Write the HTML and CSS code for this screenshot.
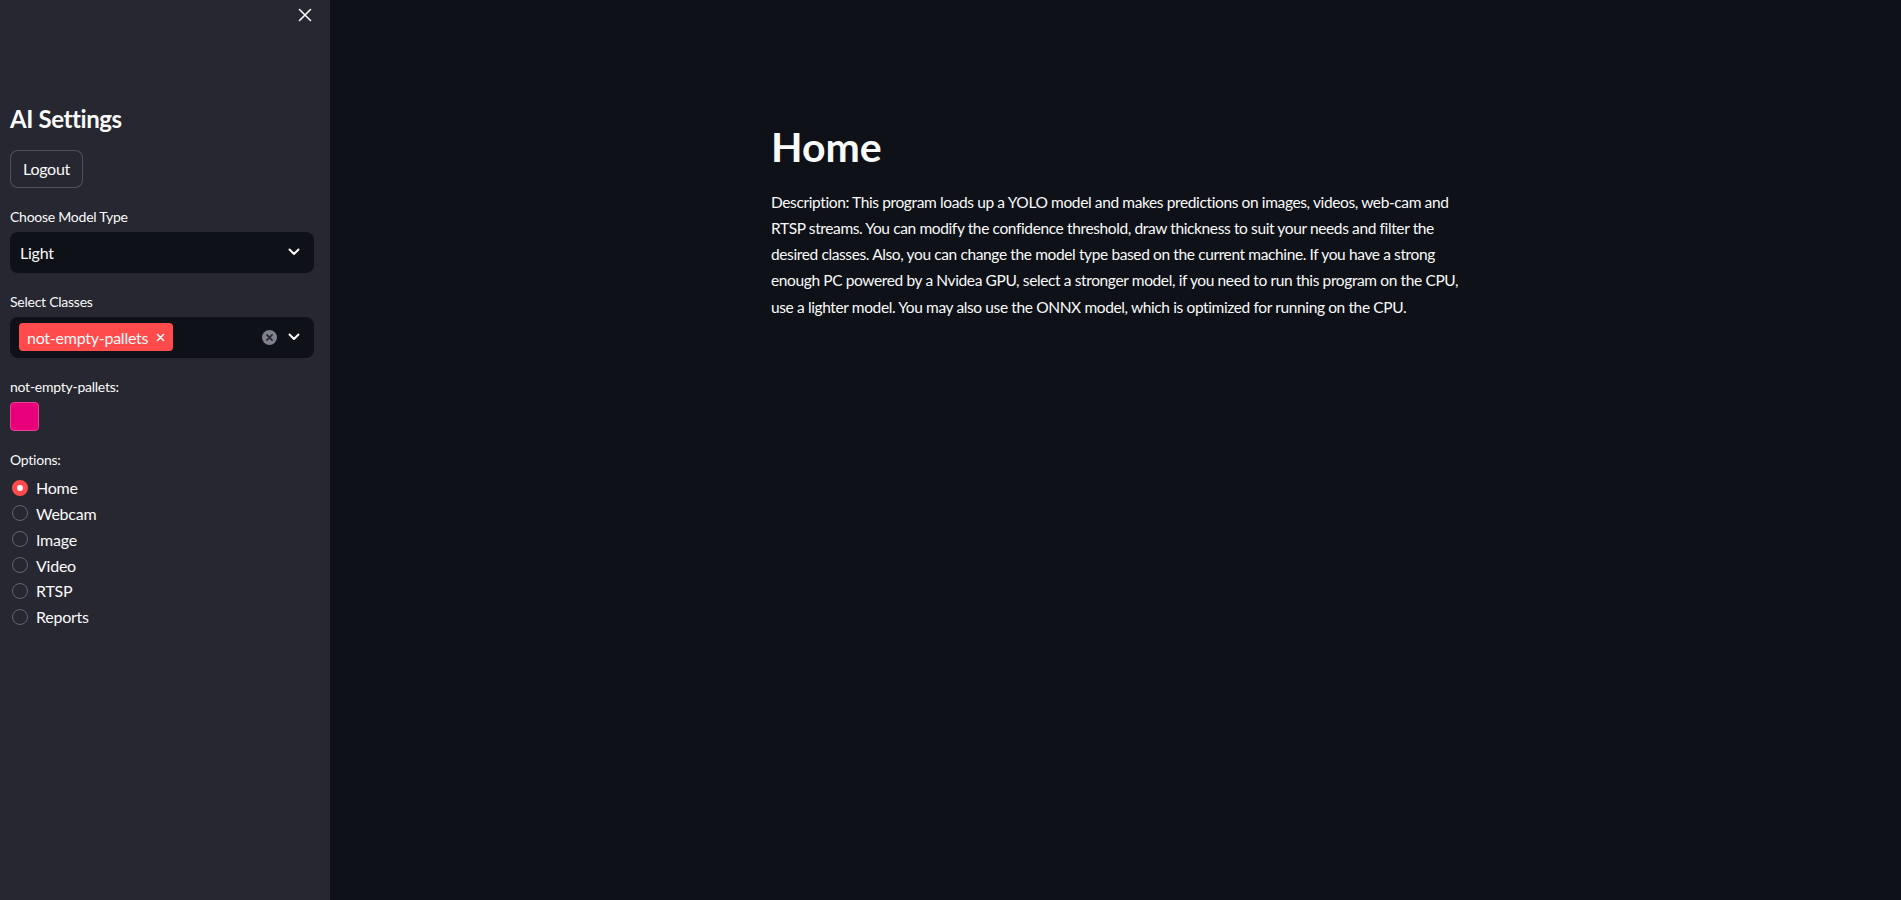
FILE: index.html
```html
<!DOCTYPE html>
<html lang="en">
<head>
<meta charset="utf-8">
<title>Home</title>
<link rel="stylesheet" href="styles.css">
</head>
<body>
<div class="app">
  <aside class="sidebar">
    <div class="sb-top">
      <button class="close-btn" aria-label="Close sidebar">
        <svg width="14" height="14" viewBox="0 0 14 14"><path d="M1.5 1.5L12.5 12.5M12.5 1.5L1.5 12.5" stroke="#fafafa" stroke-width="1.6" stroke-linecap="round"/></svg>
      </button>
    </div>
    <h2 class="sb-title">AI Settings</h2>
    <button class="btn">Logout</button>

    <div class="widget">
      <div class="label">Choose Model Type</div>
      <div class="select">
        <span class="select-value">Light</span>
        <svg class="chev" width="12" height="8" viewBox="0 0 12 8"><path d="M1.5 1.5L6 6L10.5 1.5" fill="none" stroke="#fafafa" stroke-width="2" stroke-linecap="round" stroke-linejoin="round"/></svg>
      </div>
    </div>

    <div class="widget">
      <div class="label">Select Classes</div>
      <div class="select multi">
        <span class="tag">not-empty-pallets
          <svg class="tag-x" width="9" height="9" viewBox="0 0 9 9"><path d="M1.5 1.5L7.5 7.5M7.5 1.5L1.5 7.5" stroke="#fafafa" stroke-width="1.6" stroke-linecap="round"/></svg>
        </span>
        <span class="spacer"></span>
        <svg class="clear" width="15" height="15" viewBox="0 0 16 16"><circle cx="8" cy="8" r="8" fill="#7f828c"/><path d="M5.3 5.3L10.7 10.7M10.7 5.3L5.3 10.7" stroke="#262730" stroke-width="1.8" stroke-linecap="round"/></svg>
        <svg class="chev" width="12" height="8" viewBox="0 0 12 8"><path d="M1.5 1.5L6 6L10.5 1.5" fill="none" stroke="#fafafa" stroke-width="2" stroke-linecap="round" stroke-linejoin="round"/></svg>
      </div>
    </div>

    <div class="widget">
      <div class="label">not-empty-pallets:</div>
      <div class="swatch"></div>
    </div>

    <div class="widget">
      <div class="label">Options:</div>
      <ul class="radios">
        <li class="radio checked"><span class="dot"></span>Home</li>
        <li class="radio"><span class="dot"></span>Webcam</li>
        <li class="radio"><span class="dot"></span>Image</li>
        <li class="radio"><span class="dot"></span>Video</li>
        <li class="radio"><span class="dot"></span>RTSP</li>
        <li class="radio"><span class="dot"></span>Reports</li>
      </ul>
    </div>
  </aside>

  <main class="main">
    <div class="block">
      <h1 class="page-title">Home</h1>
      <p class="desc">Description: This program loads up a YOLO model and makes predictions on images, videos, web-cam and RTSP streams. You can modify the confidence threshold, draw thickness to suit your needs and filter the desired classes. Also, you can change the model type based on the current machine. If you have a strong enough PC powered by a Nvidea GPU, select a stronger model, if you need to run this program on the CPU, use a lighter model. You may also use the ONNX model, which is optimized for running on the CPU.</p>
    </div>
  </main>
</div>
</body>
</html>
```

FILE: styles.css
```css
* { box-sizing: border-box; }

html, body {
  margin: 0;
  padding: 0;
  height: 100%;
}

body {
  background: #0e1117;
  color: #fafafa;
  font-family: Lato, "Liberation Sans", sans-serif;
  font-size: 16px;
  letter-spacing: -0.25px;
}

.app {
  display: flex;
  min-height: 100vh;
}

/* ---------- Sidebar ---------- */
.sidebar {
  width: 330px;
  flex: 0 0 330px;
  background: #262730;
  padding: 0 16px 0 10px;
  display: flex;
  flex-direction: column;
}

.sb-top {
  height: 30px;
  display: flex;
  justify-content: flex-end;
  align-items: center;
  padding-right: 2px;
}

.close-btn {
  background: none;
  border: 0;
  padding: 0;
  width: 14px;
  height: 14px;
  display: flex;
  cursor: pointer;
}

.sb-title {
  margin: 75px 0 0;
  font-size: 24px;
  line-height: 28.8px;
  font-weight: 700;
  letter-spacing: -0.4px;
}

.btn {
  align-self: flex-start;
  margin-top: 16px;
  height: 38px;
  padding: 0 12px;
  background: #262730;
  color: #fafafa;
  font-family: inherit;
  font-size: 16px;
  letter-spacing: -0.25px;
  border: 1px solid rgba(250, 250, 250, 0.2);
  border-radius: 8px;
}

.widget {
  margin-top: 17px;
  display: flex;
  flex-direction: column;
}

.label {
  font-size: 14px;
  line-height: 21px;
  height: 21px;
  margin-top: 1px;
  margin-bottom: 5px;
}

.select {
  height: 41px;
  background: #0e1117;
  border-radius: 8px;
  display: flex;
  align-items: center;
  padding: 0 14px 0 10px;
}

.select-value {
  flex: 1;
  font-size: 16px;
}

.chev { margin-left: 8px; }

.multi { padding-left: 9px; }

.tag {
  background: #ff4b4b;
  color: #fafafa;
  border-radius: 4px;
  height: 28px;
  display: inline-flex;
  align-items: center;
  padding: 0 8px;
  font-size: 16px;
  gap: 8px;
}

.spacer { flex: 1; }

.clear { margin-right: 3px; }

.swatch {
  width: 29px;
  height: 29px;
  background: #e8007b;
  border: 1px solid #f0409a;
  border-radius: 4px;
}

.radios {
  list-style: none;
  margin: 0;
  padding: 0;
}

.radio {
  height: 25.8px;
  display: flex;
  align-items: center;
  font-size: 16px;
  gap: 8px;
}

.dot {
  width: 16px;
  height: 16px;
  margin-left: 2px;
  border-radius: 50%;
  border: 1.5px solid #62646e;
  flex: 0 0 16px;
}

.radio.checked .dot {
  background: #fafafa;
  border: 5px solid #ff4b4b;
}

/* ---------- Main ---------- */
.main {
  flex: 1;
  display: flex;
  justify-content: center;
  padding-left: 15px;
}

.block {
  width: 704px;
  padding-top: 121px;
}

.page-title {
  margin: 0;
  font-size: 41px;
  line-height: 52.8px;
  font-weight: 700;
  letter-spacing: 0;
}

.desc {
  margin: 15px 0 0;
  font-size: 15.5px;
  line-height: 26.2px;
  letter-spacing: -0.38px;
}
```
